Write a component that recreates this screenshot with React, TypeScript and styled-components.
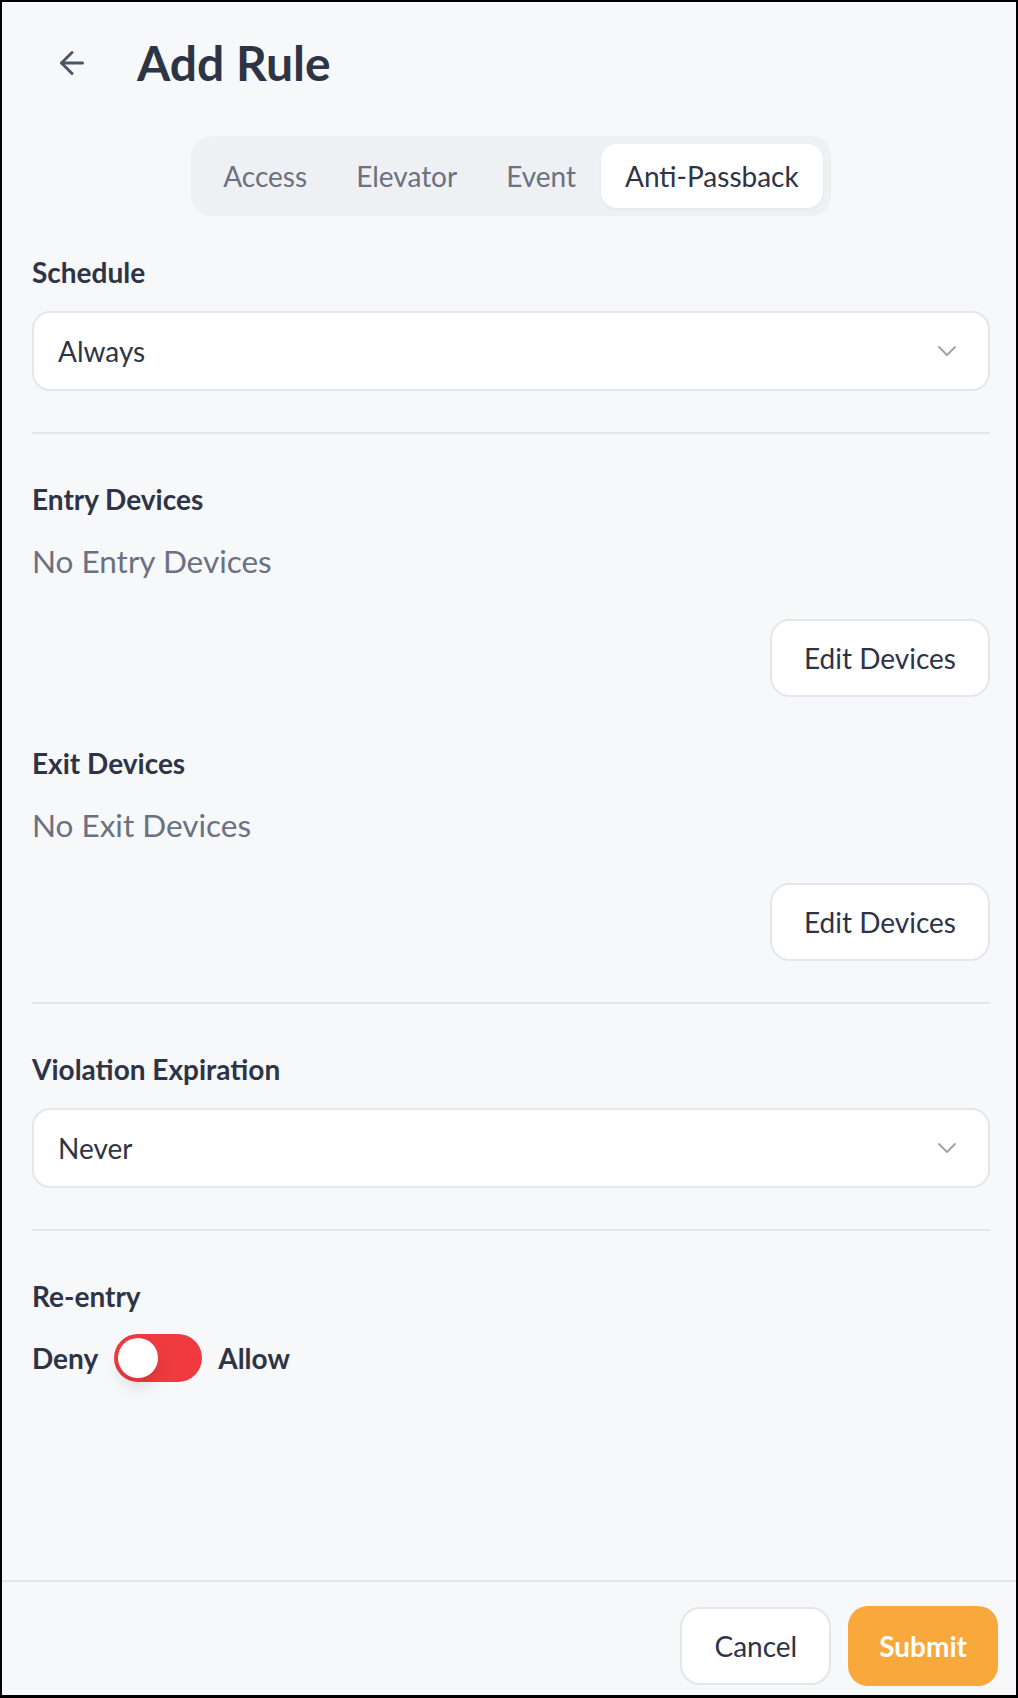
import React, { useState } from "react";
import styled, { createGlobalStyle } from "styled-components";

const GlobalStyle = createGlobalStyle`
  html, body { margin: 0; padding: 0; }
  body { font-family: Lato, "Noto Sans", sans-serif; background: #f7f8fa; }
  * { box-sizing: border-box; }
`;

const DARK = "#2d3446";
const GRAY = "#6b7180";
const LINE = "#e4e6eb";

const Frame = styled.div`
  width: 1018px;
  height: 1698px;
  border: 2px solid #000;
  border-bottom-width: 3px;
  background: #f7f8fa;
  display: flex;
  flex-direction: column;
  font-family: Lato, "Noto Sans", sans-serif;
  color: ${DARK};
`;

const Main = styled.main`
  flex: 1;
  padding: 33px 26px 0 30px;
  display: flex;
  flex-direction: column;
`;

const Header = styled.header`
  display: flex;
  align-items: center;
  height: 56px;
  padding-left: 22px;
  gap: 47px;
`;

const BackButton = styled.button`
  border: none;
  background: none;
  padding: 0;
  display: flex;
  color: #4d5466;
  cursor: pointer;
`;

const Title = styled.h1`
  margin: 0;
  font-size: 48px;
  line-height: 56px;
  font-weight: 700;
  color: ${DARK};
`;

const TabWrap = styled.div`
  display: flex;
  justify-content: center;
  margin-top: 45px;
`;

const TabBar = styled.div`
  display: inline-flex;
  padding: 8px;
  background: #eef0f3;
  border-radius: 20px;
`;

const Tab = styled.button<{ $active?: boolean }>`
  height: 64px;
  padding: 0 24.5px;
  border: none;
  border-radius: 16px;
  font-family: inherit;
  font-size: 28px;
  font-weight: 400;
  background: ${(p) => (p.$active ? "#fff" : "transparent")};
  color: ${(p) => (p.$active ? DARK : GRAY)};
  box-shadow: ${(p) => (p.$active ? "0 1px 3px rgba(0,0,0,0.06)" : "none")};
  cursor: pointer;
`;

const Section = styled.section<{ $top?: number }>`
  display: flex;
  flex-direction: column;
  margin-top: ${(p) => p.$top ?? 0}px;
`;

const Label = styled.h2`
  margin: 0;
  font-size: 28px;
  line-height: 36px;
  font-weight: 700;
  color: ${DARK};
`;

const Select = styled.div`
  margin-top: 21px;
  height: 80px;
  background: #fff;
  border: 2px solid ${LINE};
  border-radius: 18px;
  padding: 0 31px 0 24px;
  display: flex;
  align-items: center;
  justify-content: space-between;
  font-size: 28px;
  color: ${DARK};
`;

const Divider = styled.hr`
  border: none;
  border-top: 2px solid ${LINE};
  margin: 41px 0 47px;
  width: 100%;
`;

const EmptyText = styled.p`
  margin: 24px 0 0;
  font-size: 31.5px;
  line-height: 40px;
  color: ${GRAY};
`;

const ButtonRow = styled.div`
  display: flex;
  justify-content: flex-end;
  margin-top: 38px;
`;

const OutlineButton = styled.button`
  height: 78px;
  padding: 0 32px;
  background: #fff;
  border: 2px solid ${LINE};
  border-radius: 20px;
  font-family: inherit;
  font-size: 28px;
  color: ${DARK};
  cursor: pointer;
`;

const ToggleRow = styled.div`
  display: flex;
  align-items: center;
  gap: 16px;
  margin-top: 20px;
`;

const ToggleText = styled.span`
  font-size: 28px;
  line-height: 36px;
  font-weight: 700;
  color: ${DARK};
`;

const Toggle = styled.button<{ $on: boolean }>`
  width: 88px;
  height: 48px;
  border: none;
  border-radius: 24px;
  padding: 4px;
  background: ${(p) => (p.$on ? "#22c55e" : "#ef3b40")};
  display: flex;
  justify-content: ${(p) => (p.$on ? "flex-end" : "flex-start")};
  cursor: pointer;
`;

const Knob = styled.span`
  width: 40px;
  height: 40px;
  border-radius: 50%;
  background: #fff;
  box-shadow: 0 10px 16px rgba(0, 0, 0, 0.1);
`;

const Footer = styled.footer`
  border-top: 2px solid ${LINE};
  padding: 24px 18px 9px;
  display: flex;
  justify-content: flex-end;
  align-items: center;
  gap: 17px;
`;

const PrimaryButton = styled.button`
  height: 80px;
  padding: 0 31px;
  background: #f9a83c;
  border: none;
  border-radius: 20px;
  font-family: inherit;
  font-size: 28px;
  font-weight: 700;
  color: #fff;
  cursor: pointer;
`;

const ArrowLeft = () => (
  <svg width="36" height="36" viewBox="0 0 24 24" fill="none" stroke="currentColor" strokeWidth="2" strokeLinecap="round" strokeLinejoin="round">
    <path d="m12 19-7-7 7-7" />
    <path d="M19 12H5" />
  </svg>
);

const Chevron = () => (
  <svg width="20" height="12" viewBox="0 0 20 12" fill="none" stroke="#9ca1ab" strokeWidth="1.8" strokeLinecap="round" strokeLinejoin="round">
    <polyline points="2,2 10,10 18,2" />
  </svg>
);

const tabs = ["Access", "Elevator", "Event", "Anti-Passback"];

export default function App() {
  const [active, setActive] = useState("Anti-Passback");
  const [allow, setAllow] = useState(false);
  return (
    <>
      <GlobalStyle />
      <Frame>
        <Main>
          <Header>
            <BackButton aria-label="Back">
              <ArrowLeft />
            </BackButton>
            <Title>Add Rule</Title>
          </Header>
          <TabWrap>
            <TabBar>
              {tabs.map((t) => (
                <Tab key={t} $active={t === active} onClick={() => setActive(t)}>
                  {t}
                </Tab>
              ))}
            </TabBar>
          </TabWrap>

          <Section $top={38}>
            <Label>Schedule</Label>
            <Select>
              <span>Always</span>
              <Chevron />
            </Select>
          </Section>

          <Divider />

          <Section>
            <Label>Entry Devices</Label>
            <EmptyText>No Entry Devices</EmptyText>
            <ButtonRow>
              <OutlineButton>Edit Devices</OutlineButton>
            </ButtonRow>
          </Section>

          <Section $top={48}>
            <Label>Exit Devices</Label>
            <EmptyText>No Exit Devices</EmptyText>
            <ButtonRow>
              <OutlineButton>Edit Devices</OutlineButton>
            </ButtonRow>
          </Section>

          <Divider />

          <Section>
            <Label>Violation Expiration</Label>
            <Select>
              <span>Never</span>
              <Chevron />
            </Select>
          </Section>

          <Divider />

          <Section>
            <Label>Re-entry</Label>
            <ToggleRow>
              <ToggleText>Deny</ToggleText>
              <Toggle $on={allow} onClick={() => setAllow(!allow)} aria-label="Re-entry">
                <Knob />
              </Toggle>
              <ToggleText>Allow</ToggleText>
            </ToggleRow>
          </Section>
        </Main>
        <Footer>
          <OutlineButton>Cancel</OutlineButton>
          <PrimaryButton>Submit</PrimaryButton>
        </Footer>
      </Frame>
    </>
  );
}
